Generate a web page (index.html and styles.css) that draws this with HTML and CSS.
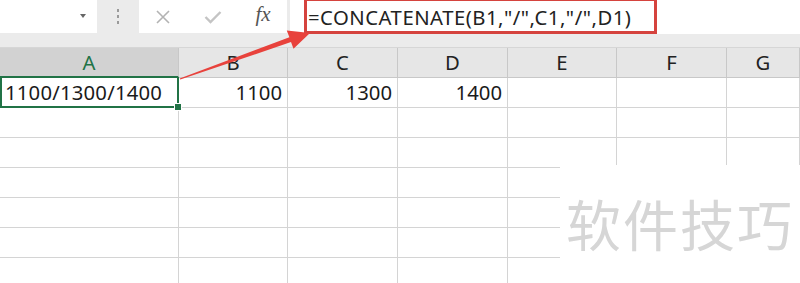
FILE: index.html
```html
<!DOCTYPE html>
<html lang="zh-CN">
<head>
  <meta charset="UTF-8">
  <title>CONCATENATE</title>
  <link rel="stylesheet" href="styles.css">
</head>
<body>
  <div class="window">
    <!-- formula bar -->
    <div class="toolbar">
      <div class="namebox"><span class="caret"></span></div>
      <div class="grip"><i></i><i></i><i></i></div>
      <div class="fxbox">
        <span class="btn">
          <svg width="16" height="16" viewBox="0 0 16 16"><path d="M2 2 L14 14 M14 2 L2 14" stroke="#b3b3b3" stroke-width="1.6" fill="none"/></svg>
        </span>
        <span class="btn">
          <svg width="18" height="14" viewBox="0 0 18 14"><path d="M1.5 7 L6.5 12 L16.5 2" stroke="#c4c4c4" stroke-width="2.4" fill="none"/></svg>
        </span>
        <span class="btn fx">fx</span>
      </div>
      <div class="formula">
        <div class="formula-text">=CONCATENATE(B1,"/",C1,"/",D1)</div>
      </div>
    </div>

    <!-- sheet -->
    <div class="sheet">
      <div class="hd sel">A</div>
      <div class="hd">B</div>
      <div class="hd">C</div>
      <div class="hd">D</div>
      <div class="hd">E</div>
      <div class="hd">F</div>
      <div class="hd">G</div>

      <div class="cell active">1100/1300/1400<span class="handle"></span></div>
      <div class="cell num">1100</div>
      <div class="cell num">1300</div>
      <div class="cell num">1400</div>
      <div class="cell"></div>
      <div class="cell"></div>
      <div class="cell"></div>

      <div class="cell"></div><div class="cell"></div><div class="cell"></div><div class="cell"></div><div class="cell"></div><div class="cell"></div><div class="cell"></div>
      <div class="cell"></div><div class="cell"></div><div class="cell"></div><div class="cell"></div><div class="cell"></div><div class="cell"></div><div class="cell"></div>
      <div class="cell"></div><div class="cell"></div><div class="cell"></div><div class="cell"></div><div class="cell"></div><div class="cell"></div><div class="cell"></div>
      <div class="cell"></div><div class="cell"></div><div class="cell"></div><div class="cell"></div><div class="cell"></div><div class="cell"></div><div class="cell"></div>
      <div class="cell"></div><div class="cell"></div><div class="cell"></div><div class="cell"></div><div class="cell"></div><div class="cell"></div><div class="cell"></div>
      <div class="cell"></div><div class="cell"></div><div class="cell"></div><div class="cell"></div><div class="cell"></div><div class="cell"></div><div class="cell"></div>
    </div>

    <!-- watermark -->
    <div class="watermark">软件技巧</div>

    <!-- red arrow pointing to the formula -->
    <svg class="arrow" width="800" height="283" viewBox="0 0 800 283">
      <polygon points="180.3,79.6 291.0,42.1 293.5,48.8 310,33 286.8,30.6 289.4,37.3 179.7,78.4" fill="#e8423c"/>
    </svg>
  </div>
</body>
</html>
```

FILE: styles.css
```css
body {
  margin: 0;
  padding: 0;
  background: #fff;
  font-family: "Noto Sans", "Open Sans", sans-serif;
}

.window {
  position: relative;
  width: 800px;
  height: 283px;
  overflow: hidden;
}

.toolbar {
  display: flex;
  align-items: flex-start;
  height: 48px;
  background: #ebebeb;
  border-bottom: 1px solid #d6d6d6;
  box-sizing: border-box;
}

.namebox {
  position: relative;
  width: 97px;
  height: 33px;
  background: #fff;
}

.caret {
  position: absolute;
  left: 80px;
  top: 14px;
  border-left: 3px solid transparent;
  border-right: 3px solid transparent;
  border-top: 4px solid #666;
}

.grip {
  width: 42px;
  height: 33px;
  display: flex;
  flex-direction: column;
  align-items: center;
  justify-content: center;
  gap: 3px;
}

.grip i {
  width: 2px;
  height: 3px;
  background: #9a9a9a;
}

.fxbox {
  width: 148px;
  height: 33px;
  background: #fff;
  display: flex;
  align-items: center;
  gap: 20px;
  padding-left: 9px;
  box-sizing: border-box;
}

.btn {
  display: flex;
  align-items: center;
  justify-content: center;
  width: 30px;
}

.fx {
  font-family: "Liberation Serif", serif;
  font-style: italic;
  font-size: 21px;
  color: #555;
  margin-top: -4px;
}

.formula {
  flex: 1;
  height: 34px;
  margin-left: 3px;
  background: #fff;
}

.formula-text {
  display: inline-block;
  margin: -2px 0 0 14px;
  width: 353px;
  height: 36px;
  box-sizing: border-box;
  border: 3px solid #d5433e;
  padding: 2px 0 0 1px;
  font-size: 20.3px;
  letter-spacing: 0.5px;
  color: #222;
  white-space: nowrap;
}

.sheet {
  display: grid;
  grid-template-columns: 179px 109px 110px 110px 109px 110px 73px;
  grid-auto-rows: 30px;
}

.hd,
.cell {
  border-right: 1px solid #d4d4d4;
  border-bottom: 1px solid #d4d4d4;
  font-size: 20.3px;
  color: #1a1a1a;
  line-height: 29px;
  white-space: nowrap;
}

.hd {
  background: #e6e6e6;
  border-right-color: #c8c8c8;
  border-bottom-color: #c8c8c8;
  text-align: center;
  color: #222;
}

.hd.sel {
  background: #d2d2d2;
  color: #217346;
  border-bottom: 2px solid #217346;
  line-height: 28px;
}

.cell.num {
  text-align: right;
  padding-right: 5px;
}

.cell.active {
  position: relative;
  border: 2px solid #217346;
  border-top: none;
  margin-top: -1px;
  padding-left: 3px;
  letter-spacing: 0.2px;
  line-height: 30px;
}

.handle {
  position: absolute;
  right: -5px;
  bottom: -5px;
  width: 6px;
  height: 6px;
  background: #217346;
  border: 1px solid #fff;
}

.watermark {
  position: absolute;
  left: 560px;
  top: 165px;
  right: 0;
  bottom: 0;
  background: #fff;
  padding: 30px 0 0 6px;
  font-family: "Noto Sans CJK SC", sans-serif;
  font-size: 55px;
  letter-spacing: 2px;
  color: #d6d6d6;
  line-height: 1;
}

.arrow {
  position: absolute;
  left: 0;
  top: 0;
}
```
